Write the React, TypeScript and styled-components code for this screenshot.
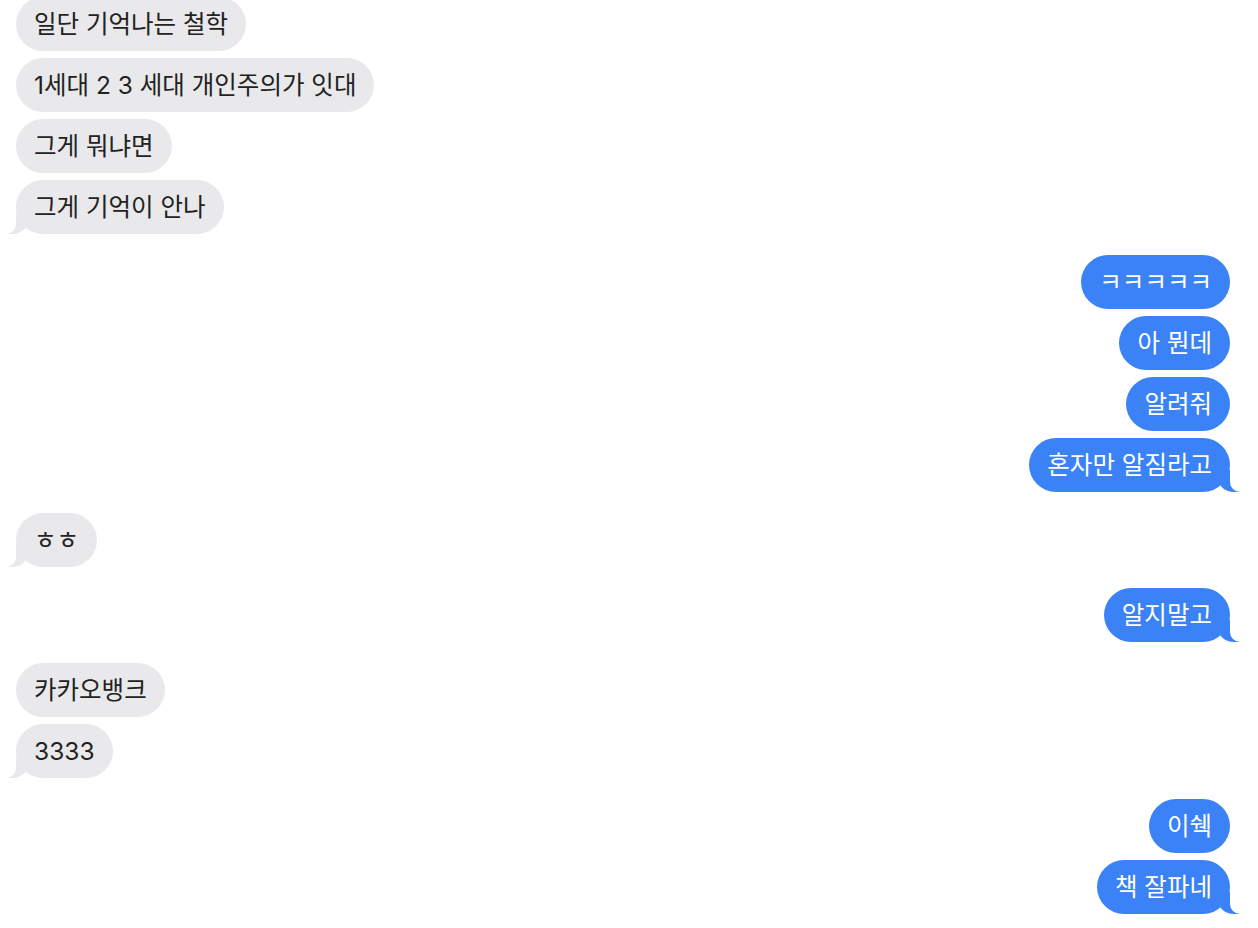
import React, { FC } from "react";
import styled, { createGlobalStyle, css } from "styled-components";

type Side = "them" | "me";

type Group = {
  side: Side;
  messages: string[];
};

const groups: Group[] = [
  {
    side: "them",
    messages: ["일단 기억나는 철학", "1세대 2 3 세대 개인주의가 잇대", "그게 뭐냐면", "그게 기억이 안나"],
  },
  { side: "me", messages: ["ㅋㅋㅋㅋㅋ", "아 뭔데", "알려줘", "혼자만 알짐라고"] },
  { side: "them", messages: ["ㅎㅎ"] },
  { side: "me", messages: ["알지말고"] },
  { side: "them", messages: ["카카오뱅크", "3333"] },
  { side: "me", messages: ["이쉑", "책 잘파네"] },
];

const App: FC = (): JSX.Element => {
  return (
    <>
      <GlobalStyle />
      <Thread>
        {groups.map((group, gi) => (
          <MsgGroup key={gi} side={group.side}>
            {group.messages.map((text, mi) => (
              <Bubble key={mi} side={group.side} tail={mi === group.messages.length - 1}>
                {text}
              </Bubble>
            ))}
          </MsgGroup>
        ))}
      </Thread>
    </>
  );
};

export default App;

const GlobalStyle = createGlobalStyle`
  body {
    margin: 0;
    background: #fff;
    font-family: "Inter", "Noto Sans CJK KR", sans-serif;
    overflow: hidden;
  }
`;

const Thread = styled.div`
  display: flex;
  flex-direction: column;
  gap: 21px;
  padding: 0 28px 0 16px;
  margin-top: -3px;
`;

const MsgGroup = styled.div<{ side: Side }>`
  display: flex;
  flex-direction: column;
  gap: 7px;
  align-items: ${(p) => (p.side === "me" ? "flex-end" : "flex-start")};
`;

const themTail = css`
  &::before {
    content: "";
    position: absolute;
    bottom: 0;
    left: -8px;
    width: 20px;
    height: 22px;
    background: #e9e9eb;
    border-bottom-right-radius: 16px 14px;
  }
  &::after {
    content: "";
    position: absolute;
    bottom: 0;
    left: -26px;
    width: 26px;
    height: 22px;
    background: #fff;
    border-bottom-right-radius: 10px;
  }
`;

const meTail = css`
  &::before {
    content: "";
    position: absolute;
    bottom: 0;
    right: -10px;
    width: 22px;
    height: 22px;
    background: #3b82f6;
    border-bottom-left-radius: 16px 14px;
  }
  &::after {
    content: "";
    position: absolute;
    bottom: 0;
    right: -26px;
    width: 26px;
    height: 22px;
    background: #fff;
    border-bottom-left-radius: 10px;
  }
`;

const Bubble = styled.div<{ side: Side; tail: boolean }>`
  position: relative;
  z-index: 0;
  padding: 12px 18px;
  border-radius: 28px;
  font-size: 24.5px;
  line-height: 30px;
  white-space: nowrap;
  background: ${(p) => (p.side === "me" ? "#3b82f6" : "#e9e9eb")};
  color: ${(p) => (p.side === "me" ? "#fff" : "#222")};

  &::before,
  &::after {
    z-index: -1;
  }

  ${(p) => (p.tail ? (p.side === "me" ? meTail : themTail) : "")}
`;
